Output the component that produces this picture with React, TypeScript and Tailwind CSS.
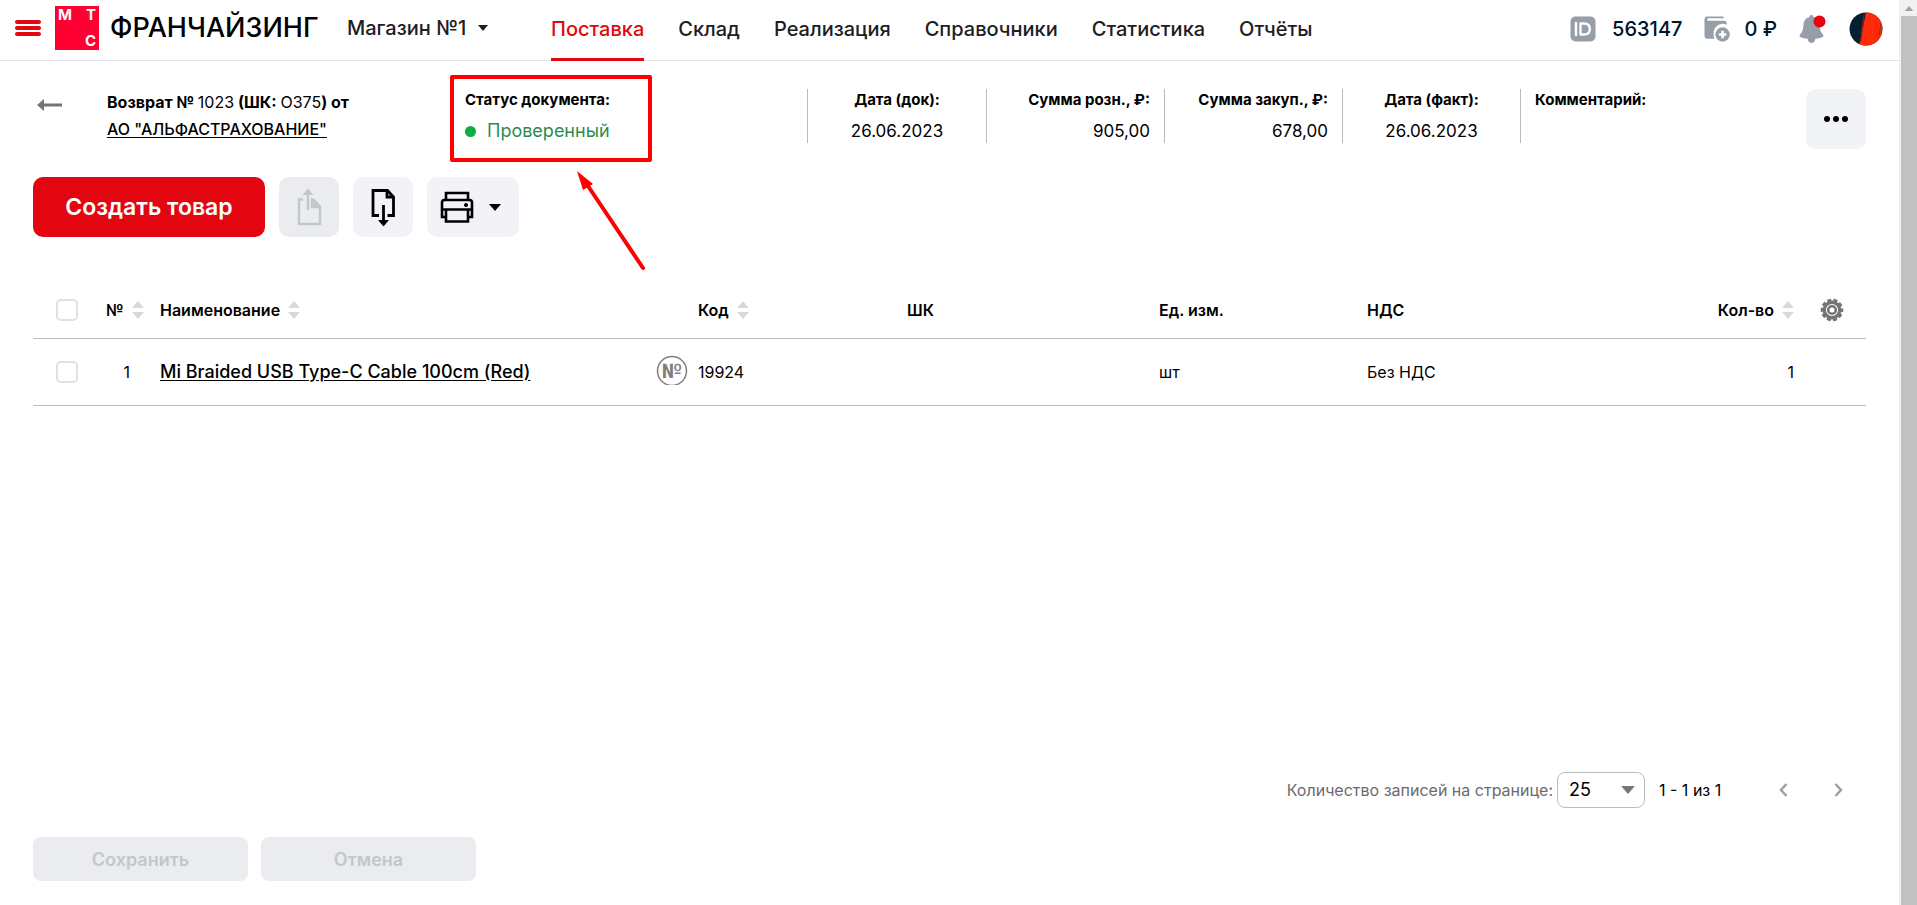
import { useState } from "react";
import clsx from "clsx";

type Item = {
  id: number;
  name: string;
  code: string;
  barcode: string;
  unit: string;
  vat: string;
  qty: number;
};

const NAV = ["Поставка", "Склад", "Реализация", "Справочники", "Статистика", "Отчёты"];

const ITEMS: Item[] = [
  {
    id: 1,
    name: "Mi Braided USB Type-C Cable 100cm (Red)",
    code: "19924",
    barcode: "",
    unit: "шт",
    vat: "Без НДС",
    qty: 1,
  },
];

function Caret({ className }: { className?: string }) {
  return (
    <svg viewBox="0 0 12 7" className={className} fill="currentColor">
      <path d="M0 0h12L6 7z" />
    </svg>
  );
}

function SortIcon() {
  return (
    <svg viewBox="0 0 12 18" className="h-[18px] w-3 shrink-0" fill="#d9d9d9">
      <path d="M6 0l6 7H0zM6 18l6-7H0z" />
    </svg>
  );
}

function Logo() {
  return (
    <span className="grid h-11 w-11 grid-cols-2 content-between bg-[#ff0032] px-[3px] py-0.5 text-[15px] leading-[14px] font-bold text-white">
      <span>М</span>
      <span className="text-right">Т</span>
      <span />
      <span className="text-right">С</span>
    </span>
  );
}

function IdIcon() {
  return (
    <svg viewBox="0 0 26 26" className="h-[26px] w-[26px]">
      <rect x="0.5" y="0.5" width="25" height="25" rx="5" fill="#969fa8" />
      <path
        d="M6 7v12M10.500 7.500h3.700c3.600 0 5.600 2 5.600 5.500s-2 5.500-5.600 5.500h-3.700z"
        fill="none"
        stroke="#fff"
        strokeWidth="2.400"
        strokeLinecap="round"
        strokeLinejoin="round"
      />
    </svg>
  );
}

function WalletIcon() {
  return (
    <svg viewBox="0 0 26 26" className="h-[26px] w-[26px]" fill="#969fa8">
      <path d="M3.500 .5H18.500a1.500 1.500 0 0 1 1.500 1.700H4.500a1.200 1.200 0 0 0 0 2.600H20c1.800 0 2.600.8 2.600 2.400v1.600A9 9 0 0 0 9.600 17c0 2.300.2 4.200 1 5.800H3.500C1.500 22.800.5 21.800.5 20V3.500c0-2 1-3 3-3z" />
      <circle cx="18.600" cy="18.500" r="7.200" />
      <path d="M18.600 14.800v7.400M14.900 18.500h7.400" stroke="#fff" strokeWidth="2.600" />
    </svg>
  );
}

function BellIcon() {
  return (
    <svg viewBox="0 0 28 30" className="h-[30px] w-7">
      <path
        d="M12.500 1c1.200 0 1.900.8 1.900 1.900 3.800.8 5.800 3.700 6.100 7.600.4 5.600 1.300 7.600 3.300 9.800.9 1 .8 2.400-.6 3-1.800.8-4.300 1.300-6.800 1.500-.4 2.500-1.700 4.200-3.900 4.200s-3.500-1.700-3.900-4.200c-2.500-.2-5-.7-6.800-1.500-1.400-.6-1.500-2-.6-3 2-2.200 2.900-4.200 3.300-9.800.3-3.900 2.300-6.800 6.100-7.600 0-1.100.7-1.900 1.900-1.900z"
        fill="#969fa8"
      />
      <circle cx="20.500" cy="7.500" r="6" fill="#e30611" />
    </svg>
  );
}

function Avatar() {
  return (
    <svg viewBox="0 0 34 34" className="h-[34px] w-[34px]">
      <defs>
        <clipPath id="avatar">
          <circle cx="17" cy="17" r="16.500" />
        </clipPath>
      </defs>
      <g clipPath="url(#avatar)">
        <path d="M0 0h34v34H0z" fill="#03202f" />
        <path d="M17 0h15l2 14-4 20H10l3-14z" fill="#ff2a0a" />
        <path d="M15 2l-3 28M14 8l-2 14M32 12l-2 12" stroke="#8d2418" strokeWidth="0.800" />
      </g>
    </svg>
  );
}

function ExportIcon() {
  return (
    <svg viewBox="0 0 26 38" className="h-[38px] w-[26px]" fill="none" stroke="currentColor" strokeWidth="2.400">
      <path d="M7 11.500H3V36h21V18.500l-6.500-7H16V19h8" />
      <path d="M12 22V5" />
      <path d="M17 12l6.500 7H17z" fill="currentColor" stroke="none" />
      <path d="M12 .500l5.500 6.500h-11z" fill="currentColor" stroke="none" />
    </svg>
  );
}

function ImportIcon() {
  return (
    <svg viewBox="0 0 26 38" className="h-[38px] w-[26px]" fill="none" stroke="currentColor" strokeWidth="2.800">
      <path d="M9 27.500H3V2.500h14.500l6 6.500v18.500h-6" />
      <path d="M17 2.500V9h6.500" />
      <path d="M13.500 17v17" />
      <path d="M13.500 38.500L8 32h11z" fill="currentColor" stroke="none" />
    </svg>
  );
}

function PrinterIcon() {
  return (
    <svg viewBox="0 0 34 32" className="h-8 w-[34px]" fill="none" stroke="currentColor" strokeWidth="2.600">
      <path d="M6 9V2h22v7" />
      <path d="M6 26H2V11.500C2 10 3 9 4.500 9h25C31 9 32 10 32 11.500V26h-4" />
      <path d="M2 18.500h30M6 18.500V30.500h22V18.500" />
      <circle cx="26" cy="14" r="2" fill="currentColor" stroke="none" />
    </svg>
  );
}

function GearIcon() {
  return (
    <svg viewBox="0 0 24 24" className="h-6 w-6" fill="none" stroke="#757575">
      <circle cx="12" cy="12" r="10" strokeWidth="2.600" strokeDasharray="4 2.283" strokeDashoffset="2" />
      <circle cx="12" cy="12" r="7.800" strokeWidth="3.400" />
      <circle cx="12" cy="12" r="3.800" strokeWidth="2.600" />
    </svg>
  );
}

// serial number mark, the ring is cut off at the bottom
function SerialIcon() {
  return (
    <svg viewBox="0 0 32 30" className="mb-1 block h-[30px] w-8">
      <circle cx="16" cy="16" r="14.500" fill="none" stroke="#808080" strokeWidth="1.500" />
      <text
        x="16"
        y="23"
        textAnchor="middle"
        fill="#808080"
        className="font-['Roboto',sans-serif] text-[20px] font-bold"
      >
        №
      </text>
    </svg>
  );
}

function Tick({ label }: { label: string }) {
  return (
    <input
      type="checkbox"
      aria-label={label}
      className="block h-[22px] w-[22px] appearance-none rounded-[5px] border-2 border-[#dfe1e9] bg-white checked:bg-[#e30611]"
    />
  );
}

function Field({ label, value, className }: { label: string; value?: string; className?: string }) {
  return (
    <div className={clsx("h-[54px] border-l border-[#bcbcbc] px-3.5", className)}>
      <div className="text-[15px] leading-[22px] font-bold whitespace-nowrap">{label}</div>
      <div className="mt-2 text-[17px] leading-6">{value}</div>
    </div>
  );
}

export default function App() {
  const [active, setActive] = useState("Поставка");
  const [pageSize, setPageSize] = useState("25");

  return (
    <div className="flex min-h-screen bg-white font-['Inter',sans-serif] text-black">
      <div className="flex min-w-0 flex-1 flex-col">
        <header className="flex h-[61px] items-stretch border-b border-[#e2e3eb] pr-4 pl-[15px] text-[20px] leading-7 font-medium text-[#1d2023]">
          <div className="flex w-[536px] shrink-0 items-center pb-1">
            <button aria-label="Меню" className="flex w-[26px] flex-col gap-[2px]">
              <span className="h-1 rounded-sm bg-[#e30611]" />
              <span className="h-1 rounded-sm bg-[#e30611]" />
              <span className="h-1 rounded-sm bg-[#e30611]" />
            </button>
            <a href="#" className="ml-3.5 flex items-center gap-[11px] text-black">
              <Logo />
              <span className="w-[211px] text-[27px]">ФРАНЧАЙЗИНГ</span>
            </a>
            <button className="ml-[26px] flex items-center gap-3 whitespace-nowrap">
              Магазин №1
              <Caret className="h-1.5 w-2.5" />
            </button>
          </div>

          <nav className="flex gap-[34px]">
            {NAV.map((n) => (
              <a
                key={n}
                href="#"
                onClick={() => setActive(n)}
                className={clsx(
                  "-mb-px flex items-center border-b-[3px] pb-px",
                  n === active ? "border-[#e30611] text-[#e30611]" : "border-transparent"
                )}
              >
                {n}
              </a>
            ))}
          </nav>

          <div className="ml-auto flex items-center pb-0.5 text-[#001424]">
            <IdIcon />
            <span className="ml-4">563147</span>
            <span className="ml-[22px]">
              <WalletIcon />
            </span>
            <span className="ml-3.5">0 ₽</span>
            <button aria-label="Уведомления" className="ml-[22px]">
              <BellIcon />
            </button>
            <button aria-label="Профиль" className="ml-[22px]">
              <Avatar />
            </button>
          </div>
        </header>

        <main className="flex flex-1 flex-col px-[33px] pt-7 pb-6">
          <section className="flex items-start">
            <a href="#" aria-label="Назад" className="mt-2.5 ml-1 w-[70px] text-[#757575]">
              <svg viewBox="0 0 26 12" className="h-3 w-[26px]" fill="currentColor">
                <path d="M0 6l7-6v4.500h18v3H7V12z" />
              </svg>
            </a>
            <div className="w-[343px] text-[16px] leading-[27px]">
              <div className="font-bold">
                Возврат № <span className="font-normal">1023</span> (ШК:{" "}
                <span className="font-normal">О375</span>) от
              </div>
              <a href="#" className="font-medium underline underline-offset-2">
                АО "АЛЬФАСТРАХОВАНИЕ"
              </a>
            </div>

            <div className="relative h-[54px] w-[357px] border-l border-[#bcbcbc] px-3.5">
              <div className="text-[15px] leading-[22px] font-bold">Статус документа:</div>
              <div className="mt-2 flex items-center gap-[11px] text-[18px] leading-6 text-[#2e8b4e]">
                <span className="h-[11px] w-[11px] rounded-full bg-[#12ab43]" />
                Проверенный
              </div>
              {/* callout around the status */}
              <div className="absolute -top-3.5 -left-px h-[87px] w-[202px] rounded-xs border-4 border-[#ff0000]" />
              <svg
                viewBox="0 0 68 100"
                className="absolute top-[82px] left-[126px] h-[100px] w-[68px]"
                fill="#ff0000"
              >
                <path d="M9 12l57 85" stroke="#ff0000" strokeWidth="4" strokeLinecap="round" />
                <path d="M0 0l16 13-10 6z" />
              </svg>
            </div>
            <Field label="Дата (док):" value="26.06.2023" className="w-[179px] text-center" />
            <Field label="Сумма розн., ₽:" value="905,00" className="w-[178px] text-right" />
            <Field label="Сумма закуп., ₽:" value="678,00" className="w-[178px] text-right" />
            <Field label="Дата (факт):" value="26.06.2023" className="w-[178px] text-center" />
            <Field label="Комментарий:" className="flex-1" />
            <button
              aria-label="Ещё"
              className="flex h-[60px] w-[60px] items-center justify-center gap-[3px] rounded-[10px] bg-[#f2f3f7]"
            >
              <span className="h-1.5 w-1.5 rounded-full bg-black" />
              <span className="h-1.5 w-1.5 rounded-full bg-black" />
              <span className="h-1.5 w-1.5 rounded-full bg-black" />
            </button>
          </section>

          <section className="mt-7 flex gap-3.5">
            <button className="h-[60px] w-[232px] rounded-[10px] bg-[#e30611] text-[23px] font-semibold text-white">
              Создать товар
            </button>
            <button
              disabled
              aria-label="Выгрузить"
              className="flex h-[60px] w-[60px] items-center justify-center rounded-[10px] bg-[#ebecf0] text-[#c2c7cc]"
            >
              <ExportIcon />
            </button>
            <button
              aria-label="Загрузить"
              className="flex h-[60px] w-[60px] items-center justify-center rounded-[10px] bg-[#f2f3f7]"
            >
              <ImportIcon />
            </button>
            <button
              aria-label="Печать"
              className="flex h-[60px] w-[92px] items-center gap-[15px] rounded-[10px] bg-[#f2f3f7] pl-[13px]"
            >
              <PrinterIcon />
              <Caret className="h-[7px] w-3" />
            </button>
          </section>

          <table className="mt-[46px] w-full table-fixed text-left text-[16px] leading-6">
            <colgroup>
              <col className="w-[73px]" />
              <col className="w-[54px]" />
              <col />
              <col className="w-[42px]" />
              <col className="w-[209px]" />
              <col className="w-[252px]" />
              <col className="w-[208px]" />
              <col className="w-[208px]" />
              <col className="w-[219px]" />
              <col className="w-[72px]" />
            </colgroup>
            <thead>
              <tr className="h-[55px] border-b border-[#bcbcbc] *:font-semibold">
                <th className="pl-[23px]">
                  <Tick label="Выбрать все" />
                </th>
                <th>
                  <span className="flex items-center gap-2">
                    № <SortIcon />
                  </span>
                </th>
                <th>
                  <span className="flex items-center gap-2">
                    Наименование <SortIcon />
                  </span>
                </th>
                <th />
                <th>
                  <span className="flex items-center gap-2">
                    Код <SortIcon />
                  </span>
                </th>
                <th>ШК</th>
                <th>Ед. изм.</th>
                <th>НДС</th>
                <th>
                  <span className="flex items-center justify-end gap-2">
                    Кол-во <SortIcon />
                  </span>
                </th>
                <th className="pl-[26px]">
                  <button aria-label="Настройки таблицы" className="block">
                    <GearIcon />
                  </button>
                </th>
              </tr>
            </thead>
            <tbody>
              {ITEMS.map((it) => (
                <tr key={it.id} className="h-[67px] border-b border-[#bcbcbc]">
                  <td className="pl-[23px]">
                    <Tick label={it.name} />
                  </td>
                  <td className="pr-[30px] text-right">{it.id}</td>
                  <td>
                    <a href="#" className="text-[18px] font-medium underline underline-offset-2">
                      {it.name}
                    </a>
                  </td>
                  <td>
                    <SerialIcon />
                  </td>
                  <td>{it.code}</td>
                  <td>{it.barcode}</td>
                  <td>{it.unit}</td>
                  <td>{it.vat}</td>
                  <td className="text-right">{it.qty}</td>
                  <td />
                </tr>
              ))}
            </tbody>
          </table>

          <div className="mt-auto flex items-center justify-end pr-[23px] text-[16px] leading-6">
            <label htmlFor="page-size" className="text-[#6b6b6b]">
              Количество записей на странице:
            </label>
            <div className="relative ml-1">
              <select
                id="page-size"
                value={pageSize}
                onChange={(e) => setPageSize(e.target.value)}
                className="block h-9 w-[88px] appearance-none rounded-lg border border-[#bcbcbc] bg-white pl-[11px] text-[18px]"
              >
                <option>25</option>
                <option>50</option>
                <option>100</option>
              </select>
              <Caret className="pointer-events-none absolute top-3.5 right-2.5 h-2 w-3.5 text-[#757575]" />
            </div>
            <span className="ml-3.5 w-[120px]">1 - 1 из 1</span>
            <button aria-label="Предыдущая" className="text-[#9e9e9e]">
              <svg viewBox="0 0 9 14" className="h-3.5 w-[9px]" fill="none" stroke="currentColor" strokeWidth="2.400">
                <path d="M7.500 1L2 7l5.500 6" />
              </svg>
            </button>
            <button aria-label="Следующая" className="ml-[46px] text-[#9e9e9e]">
              <svg viewBox="0 0 9 14" className="h-3.5 w-[9px]" fill="none" stroke="currentColor" strokeWidth="2.400">
                <path d="M1.500 1L7 7l-5.500 6" />
              </svg>
            </button>
          </div>

          <div className="mt-[29px] flex gap-[13px] text-[18px] font-semibold text-[#c2c7cc]">
            <button disabled className="h-11 w-[215px] rounded-lg bg-[#ebecf0]">
              Сохранить
            </button>
            <button disabled className="h-11 w-[215px] rounded-lg bg-[#ebecf0]">
              Отмена
            </button>
          </div>
        </main>
      </div>

      {/* scrollbar */}
      <div className="flex w-[18px] shrink-0 flex-col bg-[#f1f1f1] pl-0.5">
        <div className="flex h-4 items-center justify-center text-[#a3a3a3]">
          <Caret className="h-[5px] w-2.5 rotate-180" />
        </div>
        <div className="flex-1 bg-[#c1c1c1]" />
      </div>
    </div>
  );
}
